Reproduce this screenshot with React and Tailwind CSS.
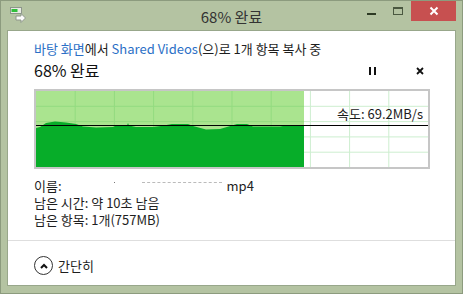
import React from "react";

const font = { fontFamily: '"Noto Sans CJK KR", "Noto Sans", sans-serif' };

// wave of the transfer-rate area, coordinates in the 392x76 chart box
const wave =
  "M0,37 L4,36 L10,32 L19,30.5 L30,31.5 L40,33 L47,35.5 L60,36.5 L77,36 L80,34.5 L91,34.5 L92,32 L93,34.5 L100,36 L117,36 L125,35 L136,33 L152,33 L157,35 L170,38.5 L184,38 L196,34.5 L201,33 L211,33 L217,35.5 L244,35.5 L250,34.5 L268,34.5 L268,76 L0,76 Z";

function CopyIcon() {
  return (
    <svg width="16" height="16" viewBox="0 0 16 16">
      <rect x="0.5" y="0.5" width="11" height="6" fill="#e8ebe4" stroke="#8d968a" />
      <rect x="1.5" y="2" width="6" height="3" fill="#2fbf3a" />
      <path d="M6 9 H11 V6.5 L15.5 11 L11 15.5 V13 H6 Z" fill="#fbfbfb" stroke="#8d968a" strokeWidth="1" />
    </svg>
  );
}

function Chart() {
  const cols = [1, 2, 3, 4, 5, 6, 7, 8, 9];
  const rows = [1, 2, 3, 4];
  return (
    <div className="relative w-[396px] h-[80px] border-2 border-[#c6c6c6] bg-white">
      <svg width="392" height="76" className="block">
        {cols.map((i) => (
          <line key={"w" + i} x1={i * 39.2} y1="0" x2={i * 39.2} y2="76" stroke="#cdeecf" strokeWidth="1" />
        ))}
        {rows.map((j) => (
          <line key={"h" + j} x1="0" y1={j * 15.3} x2="392" y2={j * 15.3} stroke="#cdeecf" strokeWidth="1" />
        ))}
        <rect x="0" y="0" width="268" height="76" fill="#aae48f" />
        {cols.slice(0, 6).map((i) => (
          <line key={"g" + i} x1={i * 39.2} y1="0" x2={i * 39.2} y2="76" stroke="#93db80" strokeWidth="1" />
        ))}
        {rows.map((j) => (
          <line key={"k" + j} x1="0" y1={j * 15.3} x2="268" y2={j * 15.3} stroke="#93db80" strokeWidth="1" />
        ))}
        <path d={wave} fill="#07ad29" />
        <line x1="0" y1="34.5" x2="392" y2="34.5" stroke="#000" strokeWidth="1" />
      </svg>
      <span className="absolute right-[5px] top-[16px] text-[13px] leading-[14px] text-[#1a1a1a]">
        속도: 69.2MB/s
      </span>
    </div>
  );
}

export default function App() {
  return (
    <div style={font} className="w-[463px] h-[294px] bg-[#b4c3a2] border border-[#8c9b7e] flex flex-col">
      {/* Title bar */}
      <div className="h-[29px] grid grid-cols-[1fr_auto_1fr]">
        <div className="pl-[9px] pt-[6px]">
          <CopyIcon />
        </div>
        <div className="text-[15px] leading-[29px] text-[#333] pt-px">68% 완료</div>
        <div className="flex justify-end items-start">
          <div className="w-[9px] h-[2px] bg-[#2d3a24] mt-[12px] mr-[17px]" />
          <div className="w-[10px] h-[8px] border border-t-2 border-[#4a5840] mt-[6px] mr-[8px]" />
          <div className="w-[45px] h-[20px] bg-[#c75050] flex items-center justify-center mr-[6px]">
            <svg width="10" height="10" viewBox="0 0 10 10">
              <path d="M1.5 1.5 L8.5 8.5 M8.5 1.5 L1.5 8.5" stroke="#fff" strokeWidth="2" />
            </svg>
          </div>
        </div>
      </div>

      {/* Dialog body */}
      <div className="flex-1 mx-[6px] mb-[7px] bg-white border border-[#98a78b] flex flex-col text-[#1e1e1e]">
        <div className="pl-[26px] pt-[9px] text-[13px] leading-[17px] whitespace-nowrap">
          <span className="text-[#2b6fc6]">바탕 화면</span>에서{" "}
          <span className="text-[#2b6fc6]">Shared Videos</span>(으)로 1개 항목 복사 중
        </div>
        <div className="pl-[26px] pr-[31px] mt-[3px] h-[20px] flex items-center">
          <div className="flex-1 text-[16px] leading-[20px] text-[#111]">68% 완료</div>
          <div className="flex gap-[3px] mt-[2px]">
            <div className="w-[2px] h-[8px] bg-[#111]" />
            <div className="w-[2px] h-[8px] bg-[#111]" />
          </div>
          <svg width="8" height="8" viewBox="0 0 8 8" className="ml-[40px] mt-[2px]">
            <path d="M1 1 L7 7 M7 1 L1 7" stroke="#111" strokeWidth="1.8" />
          </svg>
        </div>

        <div className="pl-[26px] mt-[9px]">
          <Chart />
        </div>

        <div className="pl-[26px] mt-[8px] text-[13px] leading-[17px]">
          <div className="flex items-center">
            <span>이름:</span>
            <span className="w-[165px] h-[17px] flex items-start pt-[5px]">
              <span className="ml-[52px] w-px h-px bg-[#777]" />
              <span className="ml-[27px] w-[80px] border-t border-dashed border-[#bbb]" />
            </span>
            <span className="text-[#222]">mp4</span>
          </div>
          <div>남은 시간: 약 10초 남음</div>
          <div>남은 항목: 1개(757MB)</div>
        </div>

        <div className="mt-[12px] border-t border-[#dedede]" />

        <div className="pl-[26px] pt-[15px] flex items-center gap-[5px]">
          <div className="w-[19px] h-[19px] rounded-full border-[1.5px] border-[#333] flex items-center justify-center">
            <svg width="8" height="6" viewBox="0 0 8 6">
              <path d="M1 5 L4 2 L7 5" fill="none" stroke="#111" strokeWidth="2" />
            </svg>
          </div>
          <span className="text-[13px] leading-[17px]">간단히</span>
        </div>
      </div>
    </div>
  );
}
